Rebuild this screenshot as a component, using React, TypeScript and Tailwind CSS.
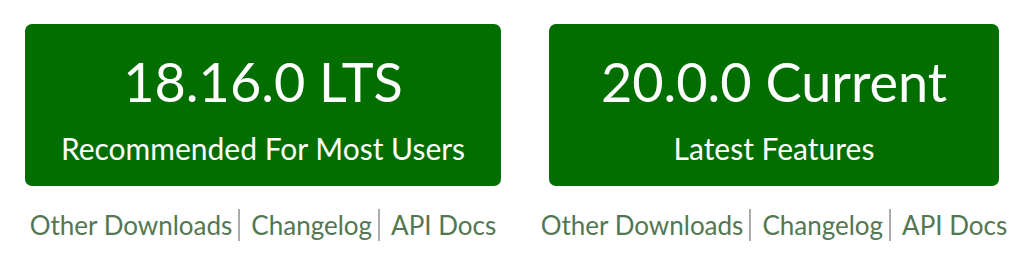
const font = { fontFamily: "Lato, 'Noto Sans', sans-serif" };

type Release = { version: string; label: string; width: string };

const releases: Release[] = [
  { version: "18.16.0 LTS", label: "Recommended For Most Users", width: "w-[476px]" },
  { version: "20.0.0 Current", label: "Latest Features", width: "w-[450px]" },
];

function Sep() {
  return <span className="ml-[6px] mr-[11px] inline-block h-[32px] w-[2px] shrink-0 bg-[#ababab]" />;
}

function DownloadBlock({ r }: { r: Release }) {
  return (
    <div className={`${r.width} flex flex-col items-center`}>
      <a
        href="#"
        className={`${r.width} h-[162px] rounded-[7px] bg-[#026e00] text-white flex flex-col items-center`}
      >
        <span className="mt-[26px] text-[54px] leading-[64px]">{r.version}</span>
        <span className="mt-[16px] text-[30px] leading-[36px]">{r.label}</span>
      </a>
      <div className="mt-[22px] flex shrink-0 items-center whitespace-nowrap text-[26px] leading-[34px] text-[#527752]">
        <a href="#">Other Downloads</a>
        <Sep />
        <a href="#">Changelog</a>
        <Sep />
        <a href="#">API Docs</a>
      </div>
    </div>
  );
}

export default function App() {
  return (
    <div className="h-[256px] w-[1032px] overflow-hidden bg-white" style={font}>
      <div className="flex gap-[48px] pl-[25px] pt-[24px]">
        {releases.map((r) => (
          <DownloadBlock key={r.version} r={r} />
        ))}
      </div>
    </div>
  );
}
